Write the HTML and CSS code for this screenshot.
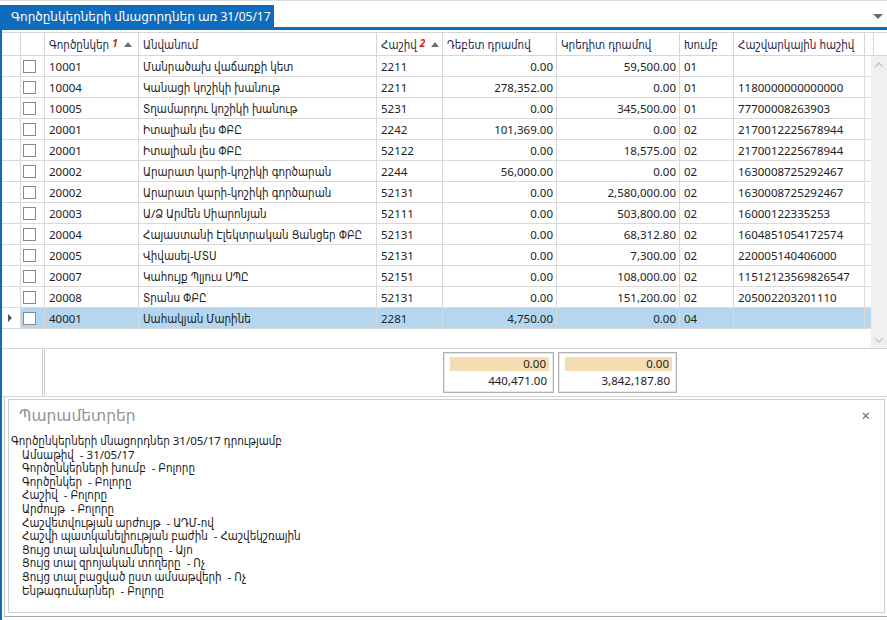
FILE: index.html
```html
<!DOCTYPE html>
<html lang="hy">
<head>
<meta charset="utf-8">
<title>Գործընկերների մնացորդներ</title>
<link rel="stylesheet" href="styles.css">
</head>
<body>
<div class="app">
  <div class="topstrip"></div>
  <div class="main">
    <div class="tabbar">
      <div class="tab"><span class="tab-title">Գործընկերների մնացորդներ առ 31/05/17</span><span class="tab-close">×</span></div>
      <div class="tab-menu"><span class="tri-down"></span></div>
    </div>
    <div class="tabline"></div>

    <div class="grid">
      <div class="grid-head">
        <div class="c"></div>
        <div class="c"></div>
        <div class="c">Գործընկեր<span class="sortno">1</span><span class="tri-up"></span></div>
        <div class="c">Անվանում</div>
        <div class="c">Հաշիվ<span class="sortno">2</span><span class="tri-up"></span></div>
        <div class="c">Դեբետ դրամով</div>
        <div class="c">Կրեդիտ դրամով</div>
        <div class="c">Խումբ</div>
        <div class="c">Հաշվարկային հաշիվ</div>
        <div class="c"></div>
        <div class="c last"></div>
      </div>
      <div class="grid-body">
        <div class="rows">
          <div class="row"><div class="c"></div><div class="c"><span class="chk"></span></div><div class="c">10001</div><div class="c">Մանրածախ վաճառքի կետ</div><div class="c">2211</div><div class="c num">0.00</div><div class="c num">59,500.00</div><div class="c">01</div><div class="c"></div><div class="c"></div></div>
          <div class="row"><div class="c"></div><div class="c"><span class="chk"></span></div><div class="c">10004</div><div class="c">Կանացի կոշիկի խանութ</div><div class="c">2211</div><div class="c num">278,352.00</div><div class="c num">0.00</div><div class="c">01</div><div class="c">1180000000000000</div><div class="c"></div></div>
          <div class="row"><div class="c"></div><div class="c"><span class="chk"></span></div><div class="c">10005</div><div class="c">Տղամարդու կոշիկի խանութ</div><div class="c">5231</div><div class="c num">0.00</div><div class="c num">345,500.00</div><div class="c">01</div><div class="c">77700008263903</div><div class="c"></div></div>
          <div class="row"><div class="c"></div><div class="c"><span class="chk"></span></div><div class="c">20001</div><div class="c">Իտալիան լես ՓԲԸ</div><div class="c">2242</div><div class="c num">101,369.00</div><div class="c num">0.00</div><div class="c">02</div><div class="c">2170012225678944</div><div class="c"></div></div>
          <div class="row"><div class="c"></div><div class="c"><span class="chk"></span></div><div class="c">20001</div><div class="c">Իտալիան լես ՓԲԸ</div><div class="c">52122</div><div class="c num">0.00</div><div class="c num">18,575.00</div><div class="c">02</div><div class="c">2170012225678944</div><div class="c"></div></div>
          <div class="row"><div class="c"></div><div class="c"><span class="chk"></span></div><div class="c">20002</div><div class="c">Արարատ կարի-կոշիկի գործարան</div><div class="c">2244</div><div class="c num">56,000.00</div><div class="c num">0.00</div><div class="c">02</div><div class="c">1630008725292467</div><div class="c"></div></div>
          <div class="row"><div class="c"></div><div class="c"><span class="chk"></span></div><div class="c">20002</div><div class="c">Արարատ կարի-կոշիկի գործարան</div><div class="c">52131</div><div class="c num">0.00</div><div class="c num">2,580,000.00</div><div class="c">02</div><div class="c">1630008725292467</div><div class="c"></div></div>
          <div class="row"><div class="c"></div><div class="c"><span class="chk"></span></div><div class="c">20003</div><div class="c">Ա/Ձ Արմեն Սիարոնյան</div><div class="c">52111</div><div class="c num">0.00</div><div class="c num">503,800.00</div><div class="c">02</div><div class="c">16000122335253</div><div class="c"></div></div>
          <div class="row"><div class="c"></div><div class="c"><span class="chk"></span></div><div class="c">20004</div><div class="c">Հայաստանի Էլեկտրական Ցանցեր ՓԲԸ</div><div class="c">52131</div><div class="c num">0.00</div><div class="c num">68,312.80</div><div class="c">02</div><div class="c">1604851054172574</div><div class="c"></div></div>
          <div class="row"><div class="c"></div><div class="c"><span class="chk"></span></div><div class="c">20005</div><div class="c">Վիվասել-ՄՏՍ</div><div class="c">52131</div><div class="c num">0.00</div><div class="c num">7,300.00</div><div class="c">02</div><div class="c">220005140406000</div><div class="c"></div></div>
          <div class="row"><div class="c"></div><div class="c"><span class="chk"></span></div><div class="c">20007</div><div class="c">Կահույք Պլյուս ՍՊԸ</div><div class="c">52151</div><div class="c num">0.00</div><div class="c num">108,000.00</div><div class="c">02</div><div class="c">11512123569826547</div><div class="c"></div></div>
          <div class="row"><div class="c"></div><div class="c"><span class="chk"></span></div><div class="c">20008</div><div class="c">Տրանս ՓԲԸ</div><div class="c">52131</div><div class="c num">0.00</div><div class="c num">151,200.00</div><div class="c">02</div><div class="c">205002203201110</div><div class="c"></div></div>
          <div class="row selected"><div class="c ind"><span class="tri-right"></span></div><div class="c"><span class="chk"></span></div><div class="c">40001</div><div class="c">Սահակյան Մարինե</div><div class="c">2281</div><div class="c num">4,750.00</div><div class="c num">0.00</div><div class="c">04</div><div class="c"></div><div class="c"></div></div>
        </div>
        <div class="vscroll">
          <svg class="chev" width="10" height="6" viewBox="0 0 10 6"><path d="M1 5 L5 1 L9 5" fill="none" stroke="#c4c4c4" stroke-width="1.3"/></svg>
          <svg class="chev" width="10" height="6" viewBox="0 0 10 6"><path d="M1 1 L5 5 L9 1" fill="none" stroke="#c4c4c4" stroke-width="1.3"/></svg>
        </div>
      </div>
      <div class="grid-foot">
        <div class="foot-lead"></div>
        <div class="foot-gap"></div>
        <div class="total debit"><div class="total-band">0.00</div><div class="total-sum">440,471.00</div></div>
        <div class="total credit"><div class="total-band">0.00</div><div class="total-sum">3,842,187.80</div></div>
      </div>
    </div>

    <div class="panel">
      <div class="panel-box">
        <div class="panel-head"><span class="panel-title">Պարամետրեր</span><span class="panel-close">×</span></div>
        <div class="panel-text">
          <div class="line">Գործընկերների մնացորդներ 31/05/17 դրությամբ</div>
          <div class="line sub">Ամսաթիվ  - 31/05/17</div>
          <div class="line sub">Գործընկերների խումբ  - Բոլորը</div>
          <div class="line sub">Գործընկեր  - Բոլորը</div>
          <div class="line sub">Հաշիվ  - Բոլորը</div>
          <div class="line sub">Արժույթ  - Բոլորը</div>
          <div class="line sub">Հաշվետվության արժույթ  - ԱԴՄ-ով</div>
          <div class="line sub">Հաշվի պատկանելիության բաժին  - Հաշվեկշռային</div>
          <div class="line sub">Ցույց տալ անվանումները  - Այո</div>
          <div class="line sub">Ցույց տալ զրոյական տողերը  - Ոչ</div>
          <div class="line sub">Ցույց տալ բացված ըստ ամսաթվերի  - Ոչ</div>
          <div class="line sub">Ենթագումարներ  - Բոլորը</div>
        </div>
      </div>
    </div>
  </div>
</div>
</body>
</html>
```
FILE: styles.css
```css
* { box-sizing: border-box; }
html, body { margin: 0; padding: 0; background: #fff; }
body {
  font-family: "Noto Sans", "DejaVu Sans Condensed", "DejaVu Sans", sans-serif;
  font-size: 11.5px;
  color: #222;
  width: 887px;
  height: 620px;
  overflow: hidden;
}
.app { width: 887px; height: 620px; display: flex; flex-direction: column; }
.topstrip { height: 5px; border-top: 1px solid #dcdcdc; flex: none; }
.main {
  flex: 1;
  border-left: 2px solid #0f6cbd;
  display: flex;
  flex-direction: column;
  min-height: 0;
}

/* tabs */
.tabbar { height: 22px; display: flex; align-items: stretch; flex: none; }
.tab {
  width: 272px;
  background: #0f6cbd;
  color: #fff;
  display: flex;
  align-items: center;
  padding-left: 9px;
  font-family: "Noto Sans", "DejaVu Sans", sans-serif;
  font-size: 12px;
}
.tab-title { white-space: nowrap; }
.tab-close { margin-left: 10px; font-size: 15px; line-height: 1; }
.tab-menu { flex: 1; display: flex; justify-content: flex-end; align-items: center; padding-right: 4px; }
.tri-down {
  width: 0; height: 0;
  border-left: 5px solid transparent;
  border-right: 5px solid transparent;
  border-top: 5px solid #6b6b6b;
}
.tabline { height: 3px; background: #0f6cbd; flex: none; }

/* grid */
.grid { flex: none; margin-top: 2px; }
.grid-head, .row {
  display: grid;
  grid-template-columns: 19px 24px 94px 238px 66px 114px 123px 54px 131px 6px;
}
.grid-head {
  grid-template-columns: 19px 24px 94px 238px 66px 114px 123px 54px 131px 6px 16px;
  height: 24px;
  border-top: 1px solid #d6d6d6;
  border-bottom: 1px solid #d6d6d6;
  color: #1f2a48;
}
.grid-head .c {
  border-right: 1px solid #d6d6d6;
  padding: 0 4px;
  display: flex;
  align-items: center;
  white-space: nowrap;
  overflow: hidden;
}
.grid-head .c.last { border-right: none; }
.sortno {
  color: #e0201c;
  font-weight: bold;
  font-style: italic;
  font-size: 10px;
  margin-left: 3px;
  margin-top: -3px;
}
.tri-up {
  width: 0; height: 0;
  border-left: 4px solid transparent;
  border-right: 4px solid transparent;
  border-bottom: 5px solid #6e6e6e;
  margin-left: 6px;
}
.grid-body { display: flex; height: 292px; }
.rows { width: 869px; }
.row { height: 21px; }
.row .c {
  border-right: 1px solid #d9d9d9;
  border-bottom: 1px solid #d9d9d9;
  padding: 0 4px;
  display: flex;
  align-items: center;
  white-space: nowrap;
  overflow: hidden;
}
.row .c:nth-child(2) { padding-left: 2px; }
.row .c.num { justify-content: flex-end; padding-right: 3px; }
.row.selected .c { background: #b4d6ef; }
.row.selected .c.ind { background: #fff; justify-content: center; padding: 0; }
.chk {
  width: 13px; height: 13px;
  border: 1px solid #8a8a8a;
  background: #fff;
  display: block;
}
.tri-right {
  width: 0; height: 0;
  border-top: 4px solid transparent;
  border-bottom: 4px solid transparent;
  border-left: 4px solid #555;
  margin-left: -2px;
}
.vscroll {
  width: 16px;
  background: #f0f0f0;
  display: flex;
  flex-direction: column;
  justify-content: space-between;
  align-items: center;
  padding: 6px 0 5px;
}
.chev { display: block; }

/* footer */
.grid-foot {
  height: 49px;
  border-top: 1px solid #d6d6d6;
  border-bottom: 1px solid #d6d6d6;
  display: flex;
  align-items: flex-start;
}
.foot-lead {
  width: 43px;
  height: 100%;
  border-right: 3px double #d0d0d0;
}
.foot-gap { width: 398px; }
.total {
  margin-top: 3px;
  height: 41px;
  border: 1px solid #b0b0b0;
  box-shadow: inset 0 0 0 1px #e8e8e8;
  padding: 4px 4px 0 6px;
  text-align: right;
}
.total.debit { width: 111px; }
.total.credit { width: 119px; margin-left: 4px; }
.total-band {
  background: #f4dcb3;
  height: 14px;
  line-height: 14px;
  padding-right: 3px;
}
.total-sum { height: 20px; line-height: 20px; padding-right: 2px; }

/* parameters panel */
.panel {
  flex: 1;
  margin-left: 2px;
  border-left: 1px solid #c8c8c8;
  border-bottom: 1px solid #a8a8a8;
  padding: 2px 2px 3px 3px;
  margin-bottom: 3px;
  min-height: 0;
}
.panel-box {
  height: 100%;
  border: 1px solid #cfcfcf;
  padding: 2px 2px 0 2px;
}
.panel-head {
  display: flex;
  justify-content: space-between;
  align-items: center;
  height: 26px;
  padding-left: 8px;
  padding-right: 12px;
}
.panel-title { color: #939393; font-size: 15.5px; font-family: "Noto Sans", "DejaVu Sans", sans-serif; }
.panel-close { color: #666; font-size: 15px; }
.panel-text { padding-top: 6px; font-size: 11.5px; color: #1a1a1a; }
.line { height: 13.6px; line-height: 13.6px; white-space: pre; }
.line.sub { padding-left: 11px; }
```
